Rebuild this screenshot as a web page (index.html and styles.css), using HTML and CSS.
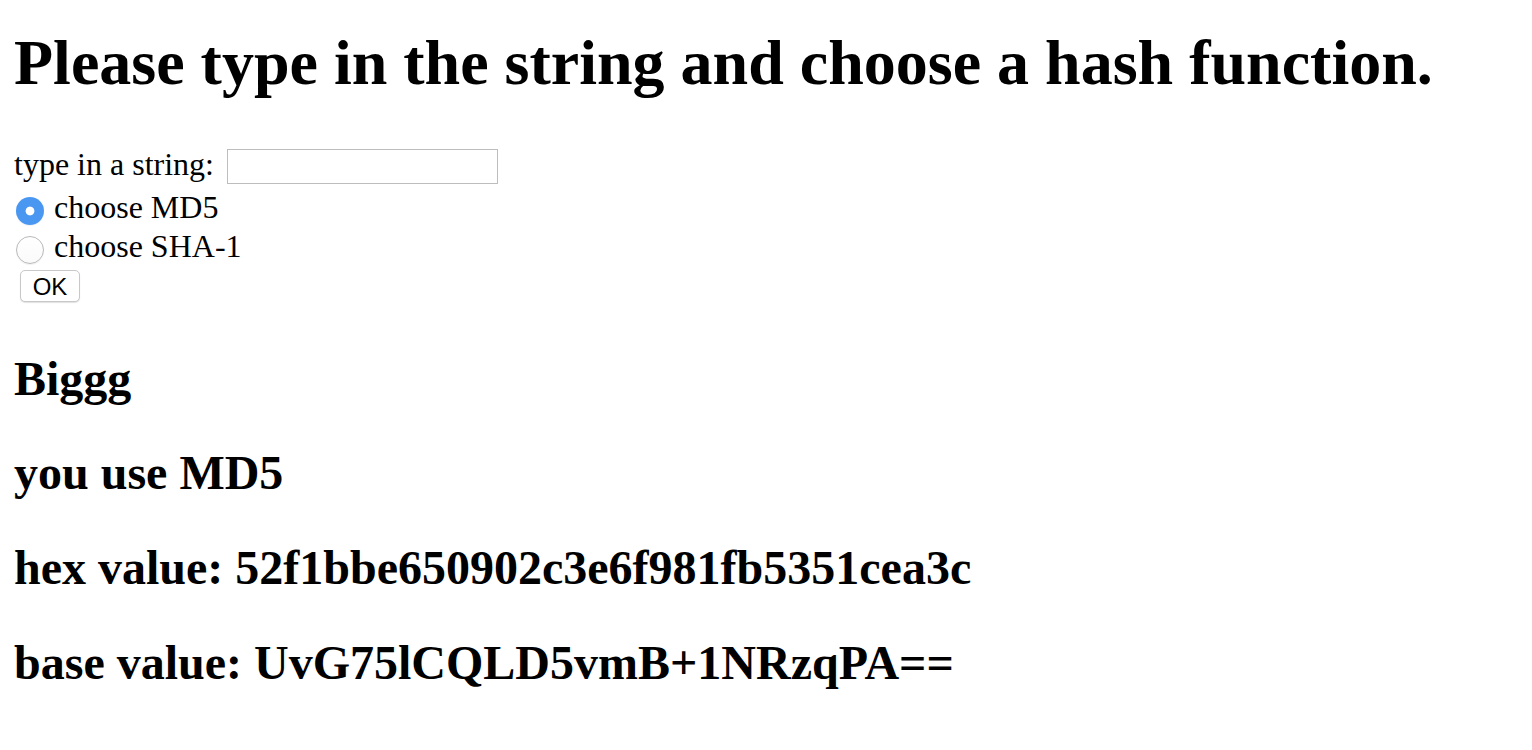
FILE: index.html
```html
<!DOCTYPE html>
<html>
<head>
<meta charset="utf-8">
<title>Hash</title>
<link rel="stylesheet" href="styles.css">
</head>
<body>
<h1 class="title">Please type in the string and choose a hash function.</h1>
<form class="form">
  <div class="row row-input">
    <span class="label">type in a string:</span>
    <span class="textbox"></span>
  </div>
  <div class="row row-radio">
    <span class="radio radio-on"></span>
    <span class="label">choose MD5</span>
  </div>
  <div class="row row-radio">
    <span class="radio"></span>
    <span class="label">choose SHA-1</span>
  </div>
  <div class="row row-button">
    <span class="button">OK</span>
  </div>
</form>
<h2 class="result">Biggg</h2>
<h2 class="result">you use MD5</h2>
<h2 class="result">hex value: 52f1bbe650902c3e6f981fb5351cea3c</h2>
<h2 class="result">base value: UvG75lCQLD5vmB+1NRzqPA==</h2>
</body>
</html>
```
FILE: styles.css
```css
html, body {
  background: #ffffff;
}
body {
  margin: 0 14px;
  padding-top: 26px;
  font-family: "Liberation Serif", "Times New Roman", serif;
  font-size: 32px;
  color: #000;
}
.title {
  font-size: 64px;
  font-weight: bold;
  line-height: 73.6px;
  margin: 0 0 46px 0;
}
.form {
  margin: 0;
}
.row {
  display: flex;
  align-items: flex-start;
  line-height: 36.8px;
}
.row-input {
  height: 43px;
}
.row-radio {
  height: 39px;
}
.textbox {
  display: block;
  width: 269px;
  height: 33px;
  margin-top: 3px;
  margin-left: 13px;
  border: 1px solid #bdbdbd;
  background: #fff;
}
.radio {
  display: block;
  box-sizing: border-box;
  width: 28px;
  height: 28px;
  margin-top: 8px;
  margin-left: 2px;
  margin-right: 10px;
  border-radius: 50%;
  border: 1.5px solid #b9b9b9;
  background: linear-gradient(#ffffff, #fafafa);
  box-shadow: 0 1px 1px rgba(0,0,0,0.06);
}
.radio-on {
  border: none;
  background: radial-gradient(circle, #ffffff 0, #ffffff 4px, #4a97f2 4.8px);
}
.row-button {
  height: 36px;
}
.button {
  display: flex;
  align-items: center;
  justify-content: center;
  box-sizing: border-box;
  width: 60px;
  height: 32px;
  margin-top: 3px;
  margin-left: 6px;
  padding-top: 2px;
  border: 1px solid #c8c8c8;
  border-radius: 5px;
  background: #fff;
  box-shadow: 0 1px 1px rgba(0,0,0,0.12);
  font-family: "Liberation Sans", Arial, sans-serif;
  font-size: 24px;
  line-height: 1;
}
.result {
  font-size: 48px;
  font-weight: bold;
  line-height: 55.2px;
  margin: 39.5px 0;
}
.form + .result {
  margin-top: 48px;
}
```
